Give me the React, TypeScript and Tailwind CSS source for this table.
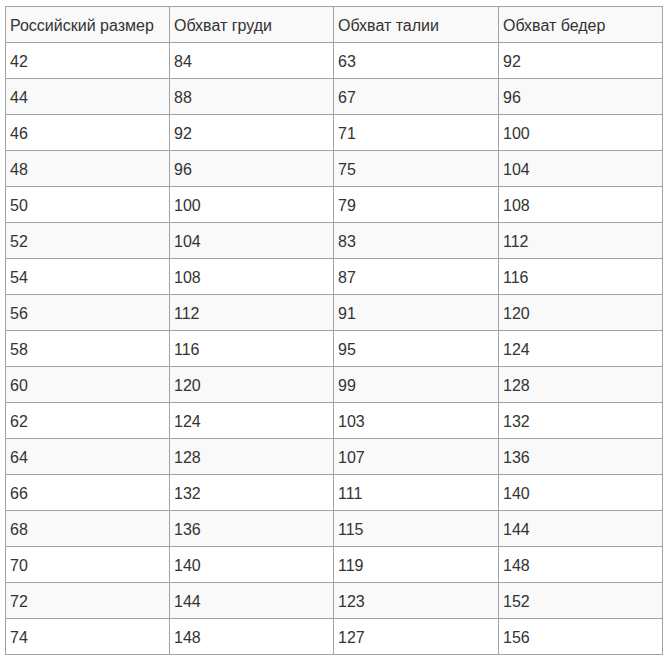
const headers = ["Российский размер", "Обхват груди", "Обхват талии", "Обхват бедер"];

const rows: number[][] = [42, 44, 46, 48, 50, 52, 54, 56, 58, 60, 62, 64, 66, 68, 70, 72, 74].map((size, i) => [
	size,
	84 + i * 4,
	63 + i * 4,
	92 + i * 4,
]);

export default function App() {
	return (
		<div className="bg-white min-h-screen pt-[6px] pl-[5px]" style={{ fontFamily: '"Liberation Sans", Arial, sans-serif' }}>
			<table className="w-[657px] table-fixed border-collapse text-[16px] text-[#333]">
				<colgroup>
					<col className="w-[164px]" />
					<col className="w-[164px]" />
					<col className="w-[165px]" />
					<col className="w-[164px]" />
				</colgroup>
				<thead>
					<tr className="bg-[#f9f9f9]">
						{headers.map(h => (
							<td key={h} className="h-[36px] border border-[#a2a2a2] pl-[4px] pr-[4px] pt-[2px] pb-0 align-middle leading-[18px]">
								{h}
							</td>
						))}
					</tr>
				</thead>
				<tbody>
					{rows.map((r, i) => (
						<tr key={r[0]} className={i % 2 === 1 ? "bg-[#f9f9f9]" : "bg-white"}>
							{r.map((v, j) => (
								<td key={j} className="h-[36px] border border-[#a2a2a2] pl-[4px] pr-[4px] pt-[2px] pb-0 align-middle leading-[18px]">
									{v}
								</td>
							))}
						</tr>
					))}
				</tbody>
			</table>
		</div>
	);
}
